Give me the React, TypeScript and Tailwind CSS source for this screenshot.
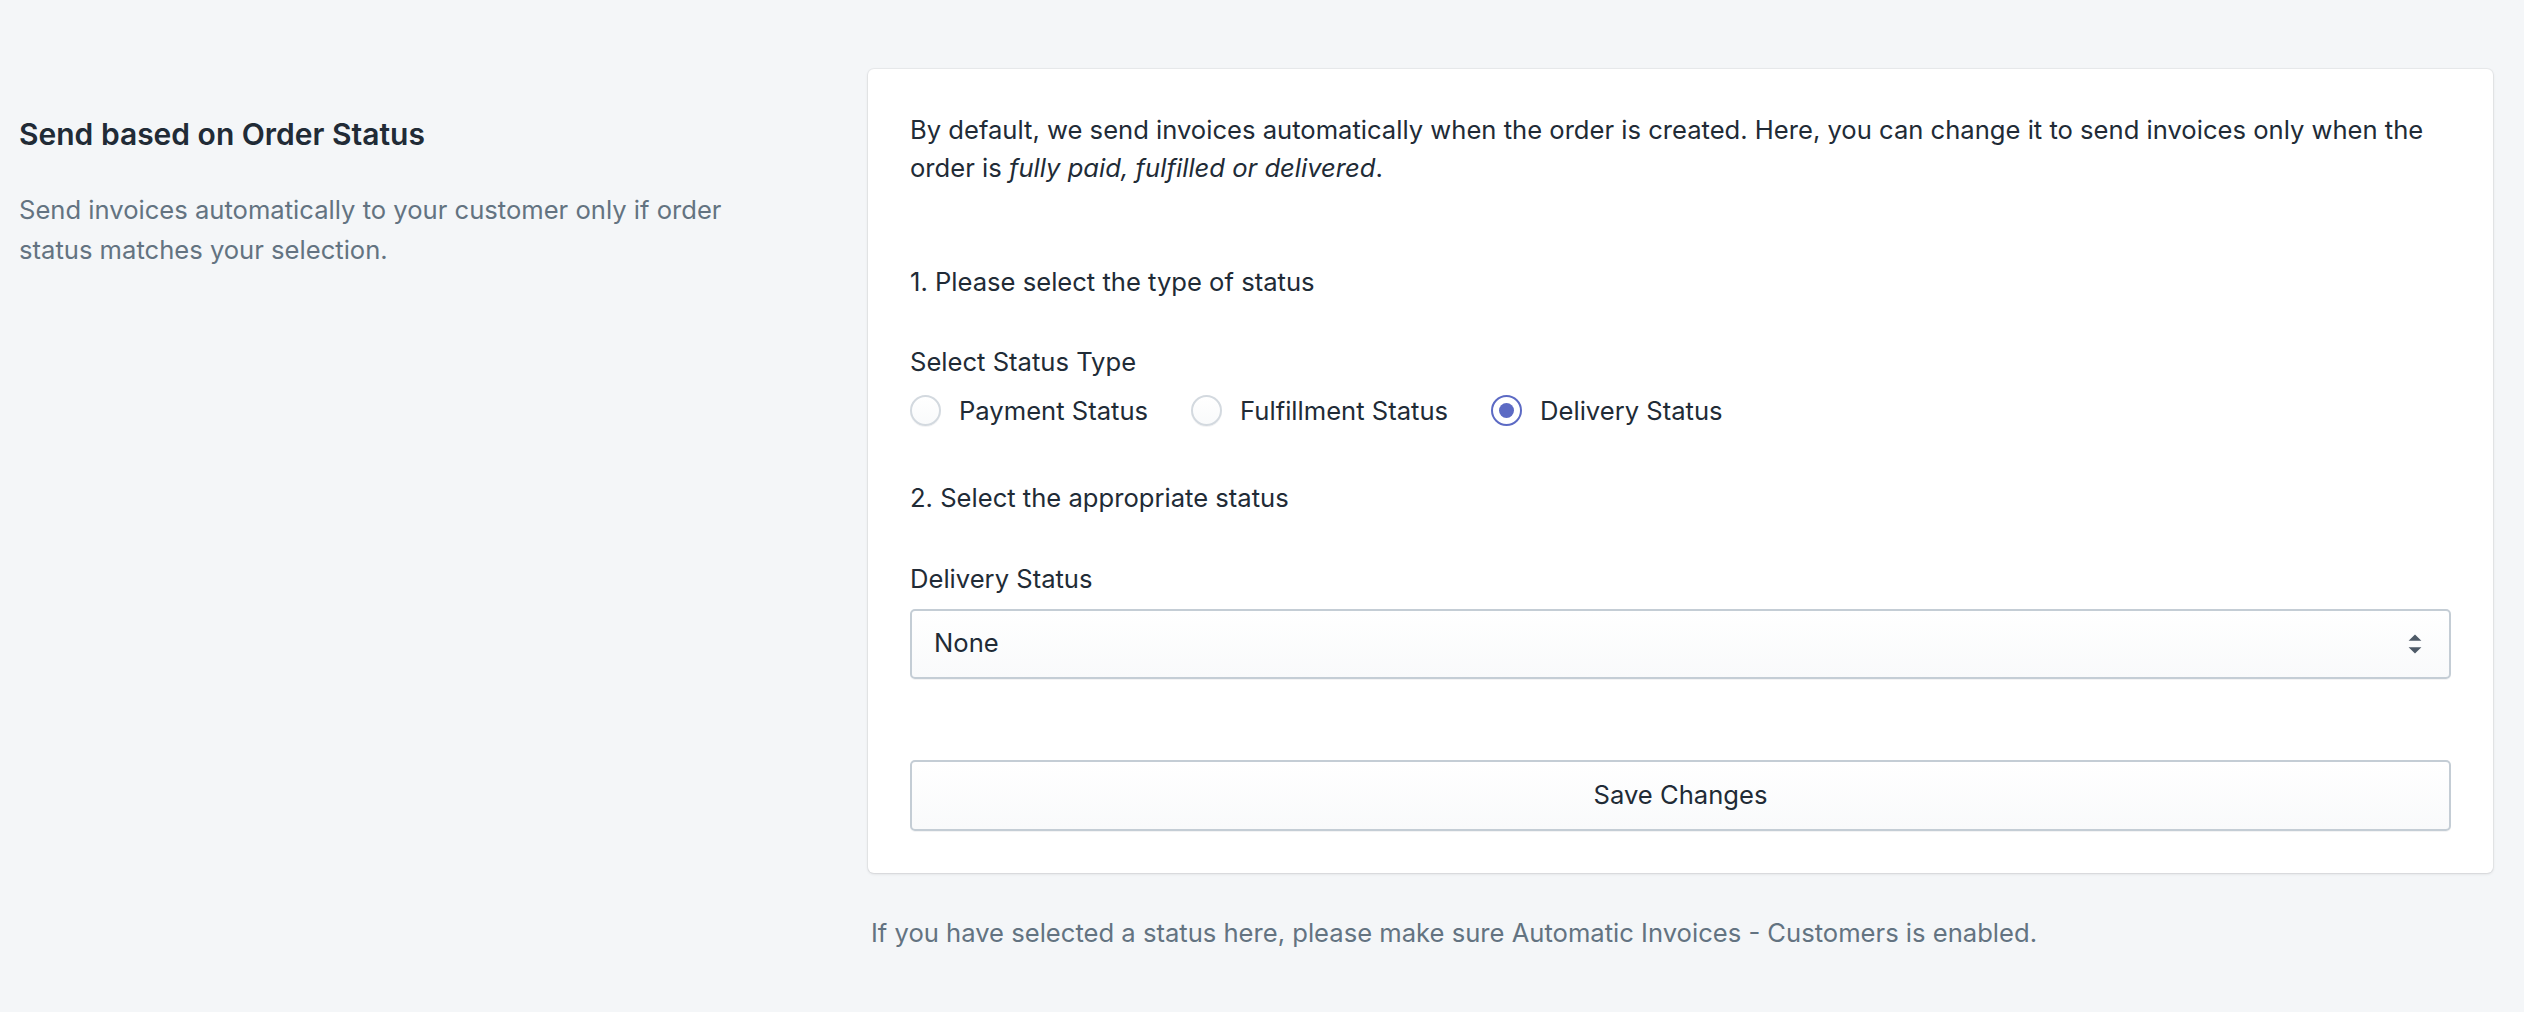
import React, { useState } from "react"

const statusTypes = ["Payment Status", "Fulfillment Status", "Delivery Status"]

function Radio({ label, checked, onSelect }: { label: string; checked: boolean; onSelect: () => void }) {
  return (
    <label className="flex items-center cursor-pointer" onClick={onSelect}>
      {checked ? (
        <span className="flex h-[31px] w-[31px] items-center justify-center rounded-full border-[2px] border-[#5c6ac4] bg-white">
          <span className="h-[15px] w-[15px] rounded-full bg-[#5c6ac4]" />
        </span>
      ) : (
        <span className="h-[31px] w-[31px] rounded-full border-[2px] border-[#d3d9df] bg-gradient-to-b from-white to-[#f9fafb] shadow-[0_1px_0_0_rgba(22,29,37,0.05)]" />
      )}
      <span className="ml-[18px]">{label}</span>
    </label>
  )
}

export default function App() {
  const [type, setType] = useState("Delivery Status")

  return (
    <div className="min-h-screen bg-[#f4f6f8] font-['Inter',sans-serif] text-[25.6px] leading-[38.4px] text-[#212b36]">
      <div className="flex pl-[19px] pr-[31px] pt-[69px] pb-[60px]">
        {/* Annotation */}
        <div className="w-[849px] shrink-0 pt-[46px]">
          <h2 className="text-[30px] font-semibold leading-[38.4px] text-[#212b36]">Send based on Order Status</h2>
          <p className="mt-[37px] max-w-[760px] leading-[40px] text-[#637381]">
            Send invoices automatically to your customer only if order status matches your selection.
          </p>
        </div>

        {/* Content */}
        <div className="flex-1">
          <div className="rounded-[6px] bg-white p-[42px] shadow-[0_0_0_1px_rgba(63,63,68,0.05),0_1px_3px_0_rgba(63,63,68,0.15)]">
            <p>
              By default, we send invoices automatically when the order is created. Here, you can change it to send
              invoices only when the order is <em>fully paid, fulfilled or delivered</em>.
            </p>

            <p className="mt-[75px]">1. Please select the type of status</p>

            <p className="mt-[42px]">Select Status Type</p>
            <div className="mt-[10px] flex items-center gap-[43px]">
              {statusTypes.map((t) => (
                <Radio key={t} label={t} checked={type === t} onSelect={() => setType(t)} />
              ))}
            </div>

            <p className="mt-[49px]">2. Select the appropriate status</p>

            <p className="mt-[43px]">{type}</p>
            <div className="mt-[10px] flex h-[70px] items-center rounded-[5px] border-[2px] border-[#c4cdd5] bg-gradient-to-b from-white to-[#f9fafb] pl-[22px] shadow-[0_1px_0_0_rgba(22,29,37,0.05)]">
              <span className="flex-1 -mt-[2px]">None</span>
              <svg viewBox="0 0 20 20" className="mr-[18px] h-[32px] w-[32px] fill-[#4f5b68]">
                <path d="M10 16l-4-4h8l-4 4zm0-12l4 4H6l4-4z" />
              </svg>
            </div>

            <button className="mt-[81px] flex h-[71px] w-full items-center justify-center rounded-[5px] border-[2px] border-[#c4cdd5] bg-gradient-to-b from-white to-[#f9fafb] text-[#212b36] shadow-[0_1px_0_0_rgba(22,29,37,0.05)]">
              Save Changes
            </button>
          </div>

          <p className="mt-[41px] pl-[3px] text-[#637381]">
            If you have selected a status here, please make sure Automatic Invoices - Customers is enabled.
          </p>
        </div>
      </div>
    </div>
  )
}
